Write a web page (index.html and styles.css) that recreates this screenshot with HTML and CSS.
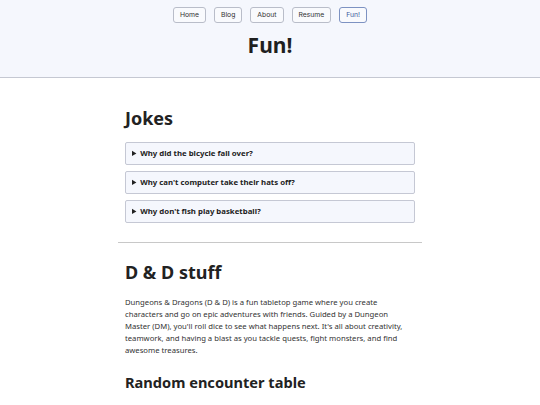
FILE: index.html
```html
<!DOCTYPE html>
<html lang="en">
<head>
<meta charset="utf-8">
<title>Fun!</title>
<link rel="stylesheet" href="styles.css">
</head>
<body>
<header class="site-header">
  <nav class="nav">
    <a class="nav-btn" href="#">Home</a>
    <a class="nav-btn" href="#">Blog</a>
    <a class="nav-btn" href="#">About</a>
    <a class="nav-btn" href="#">Resume</a>
    <a class="nav-btn active" href="#">Fun!</a>
  </nav>
  <h1 class="page-title">Fun!</h1>
</header>
<main class="content">
  <section class="section">
    <h2 class="section-title">Jokes</h2>
    <details class="joke"><summary>Why did the bicycle fall over?</summary><p>Because it was two tired.</p></details>
    <details class="joke"><summary>Why can't computer take their hats off?</summary><p>Because they have bad caps lock.</p></details>
    <details class="joke"><summary>Why don't fish play basketball?</summary><p>Because they're afraid of the net.</p></details>
  </section>
  <hr class="divider">
  <section class="section">
    <h2 class="section-title dnd">D &amp; D stuff</h2>
    <p class="text">Dungeons &amp; Dragons (D &amp; D) is a fun tabletop game where you create characters and go on epic adventures with friends. Guided by a Dungeon Master (DM), you'll roll dice to see what happens next. It's all about creativity, teamwork, and having a blast as you tackle quests, fight monsters, and find awesome treasures.</p>
    <h3 class="sub-title">Random encounter table</h3>
  </section>
</main>
</body>
</html>
```
FILE: styles.css
```css
html, body {
  margin: 0;
  padding: 0;
  background: #ffffff;
  color: #222222;
  font-family: "Noto Sans", "DejaVu Sans", sans-serif;
  font-size: 8px;
}

.site-header {
  background: #f5f7fd;
  border-bottom: 1px solid #c5c8d2;
  padding-top: 7px;
  height: 70px;
}

.nav {
  display: flex;
  justify-content: center;
  gap: 8px;
}

.nav-btn {
  display: block;
  height: 14px;
  line-height: 14px;
  padding: 0 6px;
  border: 1px solid #b9bdc9;
  border-radius: 3px;
  background: #f9fafd;
  color: #333333;
  font-family: Inter, "Liberation Sans", sans-serif;
  font-size: 6.8px;
  text-decoration: none;
}

.nav-btn.active {
  border-color: #7d92c2;
  color: #3d5a9c;
}

.page-title {
  margin: 7px 0 0;
  text-align: center;
  font-size: 21px;
  line-height: 30px;
  font-weight: 700;
  color: #1f1f1f;
}

.content {
  width: 304px;
  margin: 0 auto;
}

.section {
  padding: 0 7px;
}

.section-title {
  margin: 28px 0 12px;
  font-size: 18px;
  line-height: 24px;
  font-weight: 700;
  color: #222222;
}

.section-title.dnd {
  margin-top: 17px;
  margin-bottom: 12px;
}

.joke {
  margin-bottom: 6px;
  background: #f5f7fd;
  border: 1px solid #c5c8d4;
  border-radius: 2px;
}

.joke summary {
  padding: 5px 6px;
  line-height: 11px;
  font-weight: 700;
  font-size: 7.8px;
  cursor: pointer;
}

.joke p {
  margin: 0;
  padding: 0 6px 6px;
}

.divider {
  margin: 19px 0 0;
  border: 0;
  border-top: 1px solid #c8c8c8;
}

.text {
  margin: 0;
  font-size: 7.7px;
  line-height: 12px;
  color: #333333;
}

.sub-title {
  margin: 16px 0 0;
  font-size: 14.6px;
  line-height: 20px;
  font-weight: 700;
  color: #222222;
}
```
